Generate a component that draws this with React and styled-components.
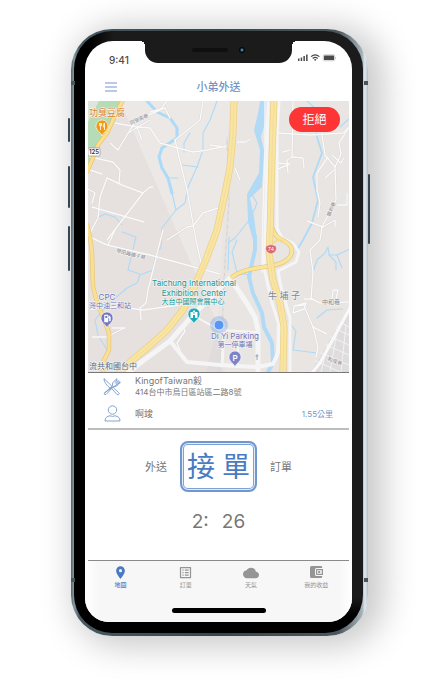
import React from "react";
import styled, { createGlobalStyle } from "styled-components";
import { MdLocationOn, MdCloud, MdListAlt } from "react-icons/md";

const blue = "#4a7bc2";
const softBlue = "#7295c9";
const grey = "#777";
const sans = `Inter, "Noto Sans CJK TC", "Noto Sans", sans-serif`;

const GlobalStyle = createGlobalStyle`
  * { box-sizing: border-box; }
  body { margin: 0; background: #fff; font-family: ${sans}; }
  button { border: 0; padding: 0; margin: 0; background: none; font-family: inherit; cursor: pointer; }
  svg { display: block; }
`;

const Page = styled.main`
  min-height: 100vh;
  display: flex;
  justify-content: center;
  align-items: flex-start;
  padding: 29px 16px 48px 17px;
  overflow: hidden;
`;

const Phone = styled.div`
  position: relative;
  width: 100%;
  max-width: 297px;
  padding: 2px 5px 3px 3px;
  border-radius: 41px;
  background: linear-gradient(90deg, #53656f 0, #8698a2 1%, #475861 3%, #37464c 50%, #4b585e 90%, #a4b1b9 98%, #e2eaef 99%, #b3bec5 100%);
  box-shadow: 9px 4px 34px 6px rgba(0, 0, 0, 0.22);
`;

const Bezel = styled.div`
  padding: 10px 11px 11px;
  border-radius: 38px;
  background:
    linear-gradient(180deg, transparent 0, transparent 94%, #000 97%),
    linear-gradient(90deg, #000 0, #000 5%, #1b1b1b 14%, #1b1b1b 100%);
`;

const SideKey = styled.span`
  position: absolute;
  width: 2px;
  height: ${(p) => p.$size}px;
  top: ${(p) => p.$top}px;
  ${(p) => (p.$right ? "right: -2px;" : "left: -3px;")}
  background: #354650;
  border-radius: 1px;
`;

const Antenna = styled.span`
  position: absolute;
  width: 4px;
  height: 4px;
  top: ${(p) => p.$top}px;
  ${(p) => (p.$right ? "right: 0;" : "left: 0;")}
  background: #4b555a;
`;

const Screen = styled.div`
  display: flex;
  flex-direction: column;
  background: #fff;
  border-radius: 28px 28px 24px 24px;
  overflow: hidden;
`;

const StatusBar = styled.div`
  display: grid;
  grid-template-columns: 60px 1fr 60px;
  height: 32px;
  align-items: start;
`;

const Clock = styled.time`
  padding: 13px 0 0 24px;
  font-size: 10px;
  line-height: 12px;
  font-weight: 500;
  color: #4a4a4a;
`;

const Notch = styled.div`
  position: relative;
  height: 22px;
  background: #1b1b1b;
  border-radius: 0 0 13px 13px;
  display: flex;
  justify-content: center;
  padding-top: 7px;
  &::before, &::after {
    content: "";
    position: absolute;
    top: 0;
    width: 5px;
    height: 5px;
  }
  &::before { left: -5px; background: radial-gradient(circle at 0 100%, transparent 5px, #1b1b1b 5px); }
  &::after { right: -5px; background: radial-gradient(circle at 100% 100%, transparent 5px, #1b1b1b 5px); }
`;

const Speaker = styled.span`
  width: 36px;
  height: 4px;
  border-radius: 2px;
  background: #0f0f0f;
  margin-left: 0;
`;

const Camera = styled.span`
  width: 6px;
  height: 6px;
  margin: -1px 0 0 11px;
  border-radius: 50%;
  background: radial-gradient(circle, #8fc0d8 0, #17364c 35%, #050708 60%);
`;

const Signals = styled.div`
  padding: 12px 0 0 6px;
`;

const Header = styled.header`
  display: grid;
  grid-template-columns: 52px 1fr 52px;
  align-items: center;
  height: 28px;
`;

const MenuButton = styled.button`
  justify-self: center;
  color: ${softBlue};
`;

const Title = styled.h1`
  margin: 0;
  text-align: center;
  font-size: 11px;
  line-height: 16px;
  font-weight: 500;
  color: ${softBlue};
`;

const Content = styled.div`
  margin: 0 3px;
`;

const MapPanel = styled.section`
  position: relative;
  border-bottom: 1px solid #777;
  background: #e8e4e2;
`;

const MapSvg = styled.svg`
  width: 100%;
  height: 271px;
  font-family: ${sans};
`;

const RejectButton = styled.button`
  position: absolute;
  top: 6px;
  right: 9px;
  width: 51px;
  height: 25px;
  border-radius: 13px;
  background: #fd3535;
  color: #fff;
  font-size: 12px;
  line-height: 16px;
`;

const Details = styled.section`
  border-bottom: 2px solid #bdbdbd;
  height: 57px;
  padding: 0 16px 2px 12px;
`;

const DetailRow = styled.div`
  display: grid;
  grid-template-columns: 24px 1fr auto;
  column-gap: 11px;
  align-items: center;
  height: 27px;
`;

const IconCell = styled.span`
  display: grid;
  place-items: center;
  color: #7598cc;
`;

const Name = styled.p`
  margin: 0;
  font-size: 9px;
  line-height: 12px;
  color: ${grey};
`;

const Address = styled.p`
  margin: 0;
  font-size: 8px;
  line-height: 11px;
  color: ${grey};
`;

const Distance = styled.span`
  font-size: 8px;
  line-height: 12px;
  color: ${softBlue};
`;

const Order = styled.section`
  padding-top: 11px;
  height: 130px;
`;

const AcceptRow = styled.div`
  display: flex;
  justify-content: center;
  align-items: center;
  gap: 13px;
  color: ${grey};
  font-size: 11px;
  line-height: 16px;
`;

const AcceptButton = styled.button`
  display: flex;
  justify-content: center;
  align-items: center;
  gap: 7px;
  width: 77px;
  height: 51px;
  border: 2px solid #6f97d0;
  box-shadow: inset 0 0 0 1px #e3ecf8, inset 0 0 0 2px #7fa2d5;
  border-radius: 8px;
  color: ${blue};
  font-size: 28px;
  line-height: 40px;
`;

const Timer = styled.p`
  display: flex;
  justify-content: center;
  gap: 13px;
  margin: 18px 0 0;
  font-size: 19px;
  line-height: 24px;
  color: #777;
`;

const TabBar = styled.nav`
  display: grid;
  grid-template-columns: repeat(4, 1fr);
  padding: 4px 0 0;
  height: 36px;
  border-top: 1px solid #8a8a8a;
`;

const Footer = styled.footer`
  background: linear-gradient(90deg, #fff 0, #f7f7f7 5%, #f7f7f7 95%, #fff 100%);
  padding: 0 3px 9px;
`;

const Tab = styled.button`
  display: flex;
  flex-direction: column;
  align-items: center;
  gap: 2px;
  color: ${(p) => (p.$active ? blue : "#959595")};
  font-size: 6px;
  line-height: 8px;
  font-weight: ${(p) => (p.$active ? 500 : 400)};
`;

const TabIcon = styled.span`
  display: grid;
  place-items: center;
  height: 14px;
`;

const HomeBar = styled.div`
  width: 94px;
  height: 5px;
  margin: 12px auto 0;
  border-radius: 3px;
  background: #000;
`;

const Curve = ({ points, ...rest }) => (
  <polyline points={points} fill="none" strokeLinejoin="round" strokeLinecap="round" {...rest} />
);

const lanes = [
  "175,140 187,190 196,240 203,272",
  "175,140 200,120 203,101",
  "115,123 137,127 150,128 160,143 193,152 207,150 226,146",
  "110,143 118,150 130,130 137,120 160,110 167,101",
  "150,112 165,108 170,118",
  "137,127 142,140",
  "128,133 150,120",
  "90,157 113,162 120,170 119,183",
  "107,178 122,185 143,193 150,187 153,187",
  "143,193 120,223 107,240",
  "92,207 144,222",
  "107,178 100,197 98,218 90,233",
  "88,189 95,193 92,203",
  "90,170 102,174",
  "167,240 187,227 193,226 203,213 218,208",
  "90,237 107,245 150,255 220,274",
  "115,230 108,245",
  "91,309 120,307 143,310 187,304",
  "163,230 148,290 146,303 140,308 141,320",
  "92,337 107,337 124,328",
  "112,328 125,328",
  "183,327 185,331 177,343 180,350",
  "278,133 310,135 343,133 350,126",
  "293,101 292,157 287,160 288,173",
  "278,163 290,164 278,169",
  "292,157 303,158 304,168",
  "283,152 290,150",
  "350,126 339,143 341,154 335,167 336,200 322,227 320,240 310,250 313,272 311,300",
  "322,135 325,155 335,167",
  "328,157 317,173 317,190 320,203 318,217",
  "307,221 323,227 335,220 335,227",
  "347,193 347,205 337,205",
  "332,155 341,163 344,158",
  "325,178 334,170",
  "237,142 246,142 250,139",
  "235,168 240,180",
  "210,145 226,147",
  "304,299 312,299 320,303 349,302",
  "304,305 294,306 293,313 304,309 306,303 298,305",
  "305,308 313,327 327,334",
  "313,327 318,347 316,357",
  "332,300 333,290 338,290 336,299",
];

const hatch = [
  "340,322 349,327", "336,329 349,335", "331,337 349,345", "326,345 349,355",
  "321,353 349,365", "316,361 340,372", "338,325 330,372", "346,325 341,372", "328,344 321,372",
];

const streams = [
  "172,193 176,210 162,228 161,247 155,257 153,270 140,275 137,283 127,288 113,300 102,311 95,320 98,335 107,350 102,365",
  "217,101 210,120 203,133 203,150 197,167 188,187 185,203 176,210",
  "190,133 184,143 184,152",
  "182,165 198,167",
  "178,178 170,178",
  "97,218 105,214 115,217 122,225",
  "122,232 136,237 128,270 140,274",
  "307,101 317,110 315,120 317,137",
  "340,127 350,118",
  "313,272 317,260 325,253 328,247 329,255 337,255 342,268",
  "329,255 336,262 336,270",
  "337,255 350,249",
  "317,318 327,310 342,309",
  "288,321 296,331 293,350 317,353",
  "229,237 228,270",
  "237,240 232,252 237,273 250,275",
  "251,193 257,203 252,215",
  "250,219 235,238 228,243",
];

const railTies = "M227 137L229 200M229 200L225 262M225 262L220 372";

const Pin = ({ x, y, fill, children }) => (
  <g transform={`translate(${x} ${y})`}>
    <path d="M0 9C-1 5-6 4-6-1a6 6 0 0 1 12 0C6 4 1 5 0 9Z" fill={fill} stroke="#fff" strokeWidth=".6" />
    {children}
  </g>
);

const Label = ({ children, ...rest }) => (
  <text textAnchor="middle" stroke="#f4f1f0" strokeWidth="1.4" paintOrder="stroke" strokeLinejoin="round" {...rest}>
    {children}
  </text>
);

const highways = [
  "234,101 233,133 230,167 225,193 217,230 207,257 193,290 183,310 167,330 147,348 130,362 120,372",
  "274,101 272,157 270,233 269,253 273,280 280,303 284,327 283,372",
];

const CityMap = () => (
  <MapSvg viewBox="88 101 261 271" preserveAspectRatio="xMidYMid slice" role="img" aria-label="地圖">
    <rect x="0" y="0" width="438" height="686" fill="#e6e1df" />
    <path d="M120 101L218 325L230 101Z" fill="#ebe8e6" />
    <path d="M230 101H349V372H225L218 325Z" fill="#e9e5e3" />
    <path d="M88 101H122L112 121L106 133L96 147L88 164Z" fill="#b5dcb7" />
    <path d="M88 101H99L88 122Z" fill="#dfe5dd" />
    <path d="M350 306L311 372H350Z" fill="#dedcdc" />

    <Curve points="147,101 157,112 170,118 177,128 177,138 162,148 159,157 162,168 168,178 172,193" stroke="#addaf7" strokeWidth="3" />
    {streams.map((p) => <Curve key={p} points={p} stroke="#addaf7" strokeWidth="1.1" />)}
    <Curve points="317,137 322,153 313,177 318,200 312,223 303,240 297,250" stroke="#addaf7" strokeWidth="1.8" />
    <path d="M260 101H267L265 123L261 137L264 150L263 170L262 187L250 198L254 217L257 240L253 240L248 222L247 194L259 173L260 150L254 130L258 113Z" fill="#b1daf6" />
    <Curve points="255,236 255,250 252,263 249,277 253,293 262,313 264,327 272,343 273,363 268,372" stroke="#b1daf6" strokeWidth="4" />

    {lanes.map((p) => <Curve key={p} points={p} stroke="#d8d5d4" strokeWidth="2.1" />)}
    {lanes.map((p) => <Curve key={p} points={p} stroke="#fbfafa" strokeWidth="1.4" />)}
    {hatch.map((p) => <Curve key={p} points={p} stroke="#f8f8f8" strokeWidth=".8" />)}
    <Curve points="350,308 320,363 312,373" stroke="#faf9f9" strokeWidth="3" />

    <path d={railTies} stroke="#d5d2d2" strokeWidth="1.2" fill="none" />
    <path d={railTies} stroke="#efedec" strokeWidth=".6" strokeDasharray="4 3" fill="none" />
    <path d="M218 325L222 372H206Z" fill="#dbd9d8" opacity=".6" />
    <Curve points="265,101 265,150 263,210 262,272" stroke="#f7f6f6" strokeWidth="1.4" />

    <g stroke="#f6f5f6">
      <Curve points="230,278 193,315 170,341 140,363 128,373" strokeWidth="5" />
      <Curve points="170,341 187,362 220,365 257,367 273,364 278,353 279,325" strokeWidth="4" />
      <Curve points="230,278 246,302 255,317 258,330 258,372" strokeWidth="5" />
      <Curve points="193,315 205,322 220,330 257,332" strokeWidth="2" />
      <Curve points="224,328 222,366" strokeWidth="3" />
      <Curve points="238,345 238,366" strokeWidth="2" />
      <Curve points="268,101 267,157 265,240 264,268 272,303 279,325" strokeWidth="3" />
      <Curve points="279,101 277,135 277,228 282,238 293,243 299,252 296,262 288,266 278,271 281,287 290,318 290,372" strokeWidth="3" />
    </g>
    <g fill="none">
      <path d="M272 228C276 242 286 238 291 247C295 257 284 264 270 266S240 270 231 278" stroke="#e3c46f" strokeWidth="4.6" />
      <path d="M272 228C276 242 286 238 291 247C295 257 284 264 270 266S240 270 231 278" stroke="#f9e49b" strokeWidth="3.4" />
      <path d="M270 250C271 242 278 239 283 241" stroke="#f7dc87" strokeWidth="2" />
    </g>
    {highways.map((p) => <Curve key={p} points={p} stroke="#e9d08a" strokeWidth="7" />)}
    {highways.map((p) => <Curve key={p} points={p} stroke="#f9e4a0" strokeWidth="5.6" />)}
    {highways.map((p) => <Curve key={p} points={p} stroke="#f1da96" strokeWidth=".8" />)}
    <Curve points="123,100 113,120 107,133 98,145 92,160 87,172" stroke="#e5bf66" strokeWidth="4.4" />
    <Curve points="123,100 113,120 107,133 98,145 92,160 87,172" stroke="#fbdf8c" strokeWidth="3.2" />
    <Curve points="87,225 90,237 92,253 93,287 97,302 103,317 109,333 109,350 103,362 103,373" stroke="#e5c474" strokeWidth="4.4" />
    <Curve points="87,225 90,237 92,253 93,287 97,302 103,317 109,333 109,350 103,362 103,373" stroke="#f9df94" strokeWidth="3.2" />

    <g fill="#888" fontSize="5">
      <Label x="139" y="121" transform="rotate(-24 139 119)">同安南巷</Label>
      <Label x="131" y="256" transform="rotate(14 131 254)">學田路鎮子巷</Label>
      <Label x="331" y="211" transform="rotate(-68 331 209)">鎮和巷</Label>
      <Label x="331" y="304" fontSize="6">中和巷</Label>
      <Label x="335" y="363" transform="rotate(20 335 361)">和成巷</Label>
    </g>
    <rect x="88" y="148" width="12" height="8" rx="1" fill="#fff" stroke="#777" strokeWidth=".5" />
    <text x="94" y="154" textAnchor="middle" fontSize="6" fontWeight="600" fill="#333">125</text>
    <Label x="284" y="299" fontSize="9" fill="#74899b" xmlSpace="preserve">牛 埔 子</Label>
    <path d="M266 246Q271 243 276 246Q278 252 271 254Q264 252 266 246Z" fill="#dc6870" stroke="#fff" strokeWidth=".5" />
    <text x="271" y="251" textAnchor="middle" fontSize="5" fill="#fff">74</text>

    <Label x="107" y="116" fontSize="9" fill="#d9822b">功臭豆腐</Label>
    <Pin x="102" y="127" fill="#f29a13">
      <path d="M-2.5-4v2.2q0 1 1 1V3M-1.5-4v3M-.5-4v2.2q0 1-1 1M2.5 3V-4Q1-3 1.2 0H2.5" fill="none" stroke="#fff" strokeWidth=".8" />
    </Pin>
    <Label x="107" y="300" fontSize="8" fill="#6c73b7">CPC</Label>
    <Label x="110" y="308" fontSize="7" fill="#6c73b7">灣中油三和站</Label>
    <Pin x="107" y="319" fill="#7378bf">
      <path d="M-2.5 3V-4H1V3ZM1-1H2.4V2H3.4V-2L2-3.5" fill="#fff" stroke="#fff" strokeWidth=".5" />
      <rect x="-1.7" y="-3" width="2" height="2" fill="#7378bf" />
    </Pin>
    <g fill="#159a94">
      <Label x="194" y="286" fontSize="8">Taichung International</Label>
      <Label x="194" y="296" fontSize="8">Exhibition Center</Label>
      <Label x="193" y="304" fontSize="7">大台中國際會展中心</Label>
    </g>
    <Pin x="194" y="315" fill="#19acb8">
      <path d="M-3.5 3V-3H-1.5L0-5L1.5-3H3.5V3H1V0H-1V3Z" fill="#fff" />
      <circle cx="0" cy="-2" r=".8" fill="#19acb8" />
    </Pin>
    <circle cx="219" cy="325" r="9" fill="#6e9fe5" opacity=".35" />
    <circle cx="219" cy="325" r="5" fill="#5b96f2" stroke="#dceaff" strokeWidth="1" />
    <Label x="235" y="339" fontSize="8" fill="#6c73b7">Di Yi Parking</Label>
    <Label x="235" y="347" fontSize="7" fill="#6c73b7">第一停車場</Label>
    <Pin x="235" y="358" fill="#7b83c9">
      <text x="0" y="2.5" textAnchor="middle" fontSize="8" fontWeight="600" fill="#fff">P</text>
    </Pin>
    <path d="M257 354V360M255.500 356H258.500" stroke="#8c939e" strokeWidth=".8" />
    <text x="89" y="369" fontSize="8" fill="#5b6e79" stroke="#f4f1f0" strokeWidth="1.4" paintOrder="stroke">流共和國台中</text>
  </MapSvg>
);

const StatusIcons = () => (
  <svg width="39" height="9" viewBox="0 0 39 9" fill="#4a4a4a" aria-hidden="true">
    <path d="M0 5.500h1.500V8H0zM2.700 4.500h1.500V8H2.700zM5.400 3h1.500v5H5.400zM8.100 1.500h1.500V8H8.100z" />
    <g fill="none" stroke="#4a4a4a" strokeWidth="1.200">
      <path d="M13 3.600Q17.200 0 21.400 3.600" />
      <path d="M14.700 5.500Q17.200 3.300 19.700 5.500" />
    </g>
    <path d="M15.900 6.600Q17.200 5.600 18.500 6.600L17.200 8z" />
    <rect x="25.300" y="1.800" width="11.400" height="6" rx="1.300" fill="none" stroke="#999" strokeWidth=".5" />
    <rect x="26" y="2.500" width="10" height="4.600" rx=".6" />
    <path d="M37.300 3.900q1 .9 0 1.800z" />
  </svg>
);

const MenuIcon = () => (
  <svg width="12" height="10" viewBox="0 0 12 10" stroke="currentColor" aria-hidden="true">
    <path d="M0 1H12M0 5H12M0 9H12" />
  </svg>
);

const CutleryIcon = () => (
  <svg width="18" height="18" viewBox="0 0 18 18" fill="none" stroke="currentColor" strokeWidth=".9" strokeLinejoin="round" strokeLinecap="round" aria-hidden="true">
    <path d="M1 1C1 4 4 8 7.500 10.200L9 8.800ZM9 11L14 16.500Q15.500 17.400 16.200 16Q16.400 15.200 15.500 14.500L10.500 9.800" />
    <path d="M1.500 15L9.500 7.800Q8.800 4.500 11.500 3L13.500 1M17 4.500L15 6.800Q12.800 9.200 10.400 8.800L3 16.500Q1.800 17 1.300 16.200Q1 15.600 1.500 15ZM15.200 2.600L12.500 5.300M16 3.500L13.400 6M13.500 1L14.300 1.600L12.300 4M17 4.500L16.200 3.800" />
  </svg>
);

const PersonIcon = () => (
  <svg width="17" height="17" viewBox="0 0 17 17" fill="none" stroke="currentColor" strokeWidth=".9" aria-hidden="true">
    <circle cx="8.500" cy="5" r="4.200" />
    <path d="M1 16C1 12.500 3 11.300 6 10.800Q8.500 12 11 10.800C14 11.300 16 12.500 16 16Z" strokeLinejoin="round" />
  </svg>
);

const WalletIcon = () => (
  <svg width="13" height="12" viewBox="0 0 13 12" fill="currentColor" aria-hidden="true">
    <path d="M1.500 0H11Q12.200 0 12.200 1.200V2H6.500Q5 2 5 3.500V8.500Q5 10 6.500 10H12.200V10.800Q12.200 12 11 12H1.500Q0 12 0 10.500V1.500Q0 0 1.500 0Z" />
    <path fillRule="evenodd" d="M6.700 3H13V9H6.700Q6 9 6 8.300V3.700Q6 3 6.700 3ZM7.200 4.200V7.800H11.800V4.200Z" />
    <rect x="8.200" y="5" width="2" height="2" />
  </svg>
);

const tabs = [
  { label: "地圖", icon: <MdLocationOn size={15} />, active: true },
  { label: "訂單", icon: <MdListAlt size={15} /> },
  { label: "天氣", icon: <MdCloud size={16} /> },
  { label: "我的收益", icon: <WalletIcon /> },
];

export default function App() {
  return (
    <Page>
      <GlobalStyle />
      <Phone>
        <SideKey $top={89} $size={24} />
        <SideKey $top={137} $size={42} />
        <SideKey $top={197} $size={45} />
        <SideKey $top={145} $size={70} $right />
        <Antenna $top={52} />
        <Antenna $top={52} $right />
        <Antenna $top={549} />
        <Antenna $top={549} $right />
        <Bezel>
          <Screen>
            <StatusBar>
              <Clock>9:41</Clock>
              <Notch>
                <Speaker />
                <Camera />
              </Notch>
              <Signals>
                <StatusIcons />
              </Signals>
            </StatusBar>
            <Header>
              <MenuButton type="button" aria-label="選單">
                <MenuIcon />
              </MenuButton>
              <Title>小弟外送</Title>
            </Header>
            <Content>
              <MapPanel>
                <CityMap />
                <RejectButton type="button">拒絕</RejectButton>
              </MapPanel>
              <Details>
                <DetailRow>
                  <IconCell><CutleryIcon /></IconCell>
                  <div>
                    <Name>KingofTaiwan毅</Name>
                    <Address>414台中市烏日區站區二路8號</Address>
                  </div>
                </DetailRow>
                <DetailRow>
                  <IconCell><PersonIcon /></IconCell>
                  <Name>啊竣</Name>
                  <Distance>1.55公里</Distance>
                </DetailRow>
              </Details>
              <Order>
                <AcceptRow>
                  <span>外送</span>
                  <AcceptButton type="button">
                    <span>接</span>
                    <span>單</span>
                  </AcceptButton>
                  <span>訂單</span>
                </AcceptRow>
                <Timer>
                  <span>2:</span>
                  <span>26</span>
                </Timer>
              </Order>
            </Content>
            <Footer>
              <TabBar>
                {tabs.map((t) => (
                  <Tab key={t.label} type="button" $active={t.active}>
                    <TabIcon>{t.icon}</TabIcon>
                    {t.label}
                  </Tab>
                ))}
              </TabBar>
              <HomeBar />
            </Footer>
          </Screen>
        </Bezel>
      </Phone>
    </Page>
  );
}
